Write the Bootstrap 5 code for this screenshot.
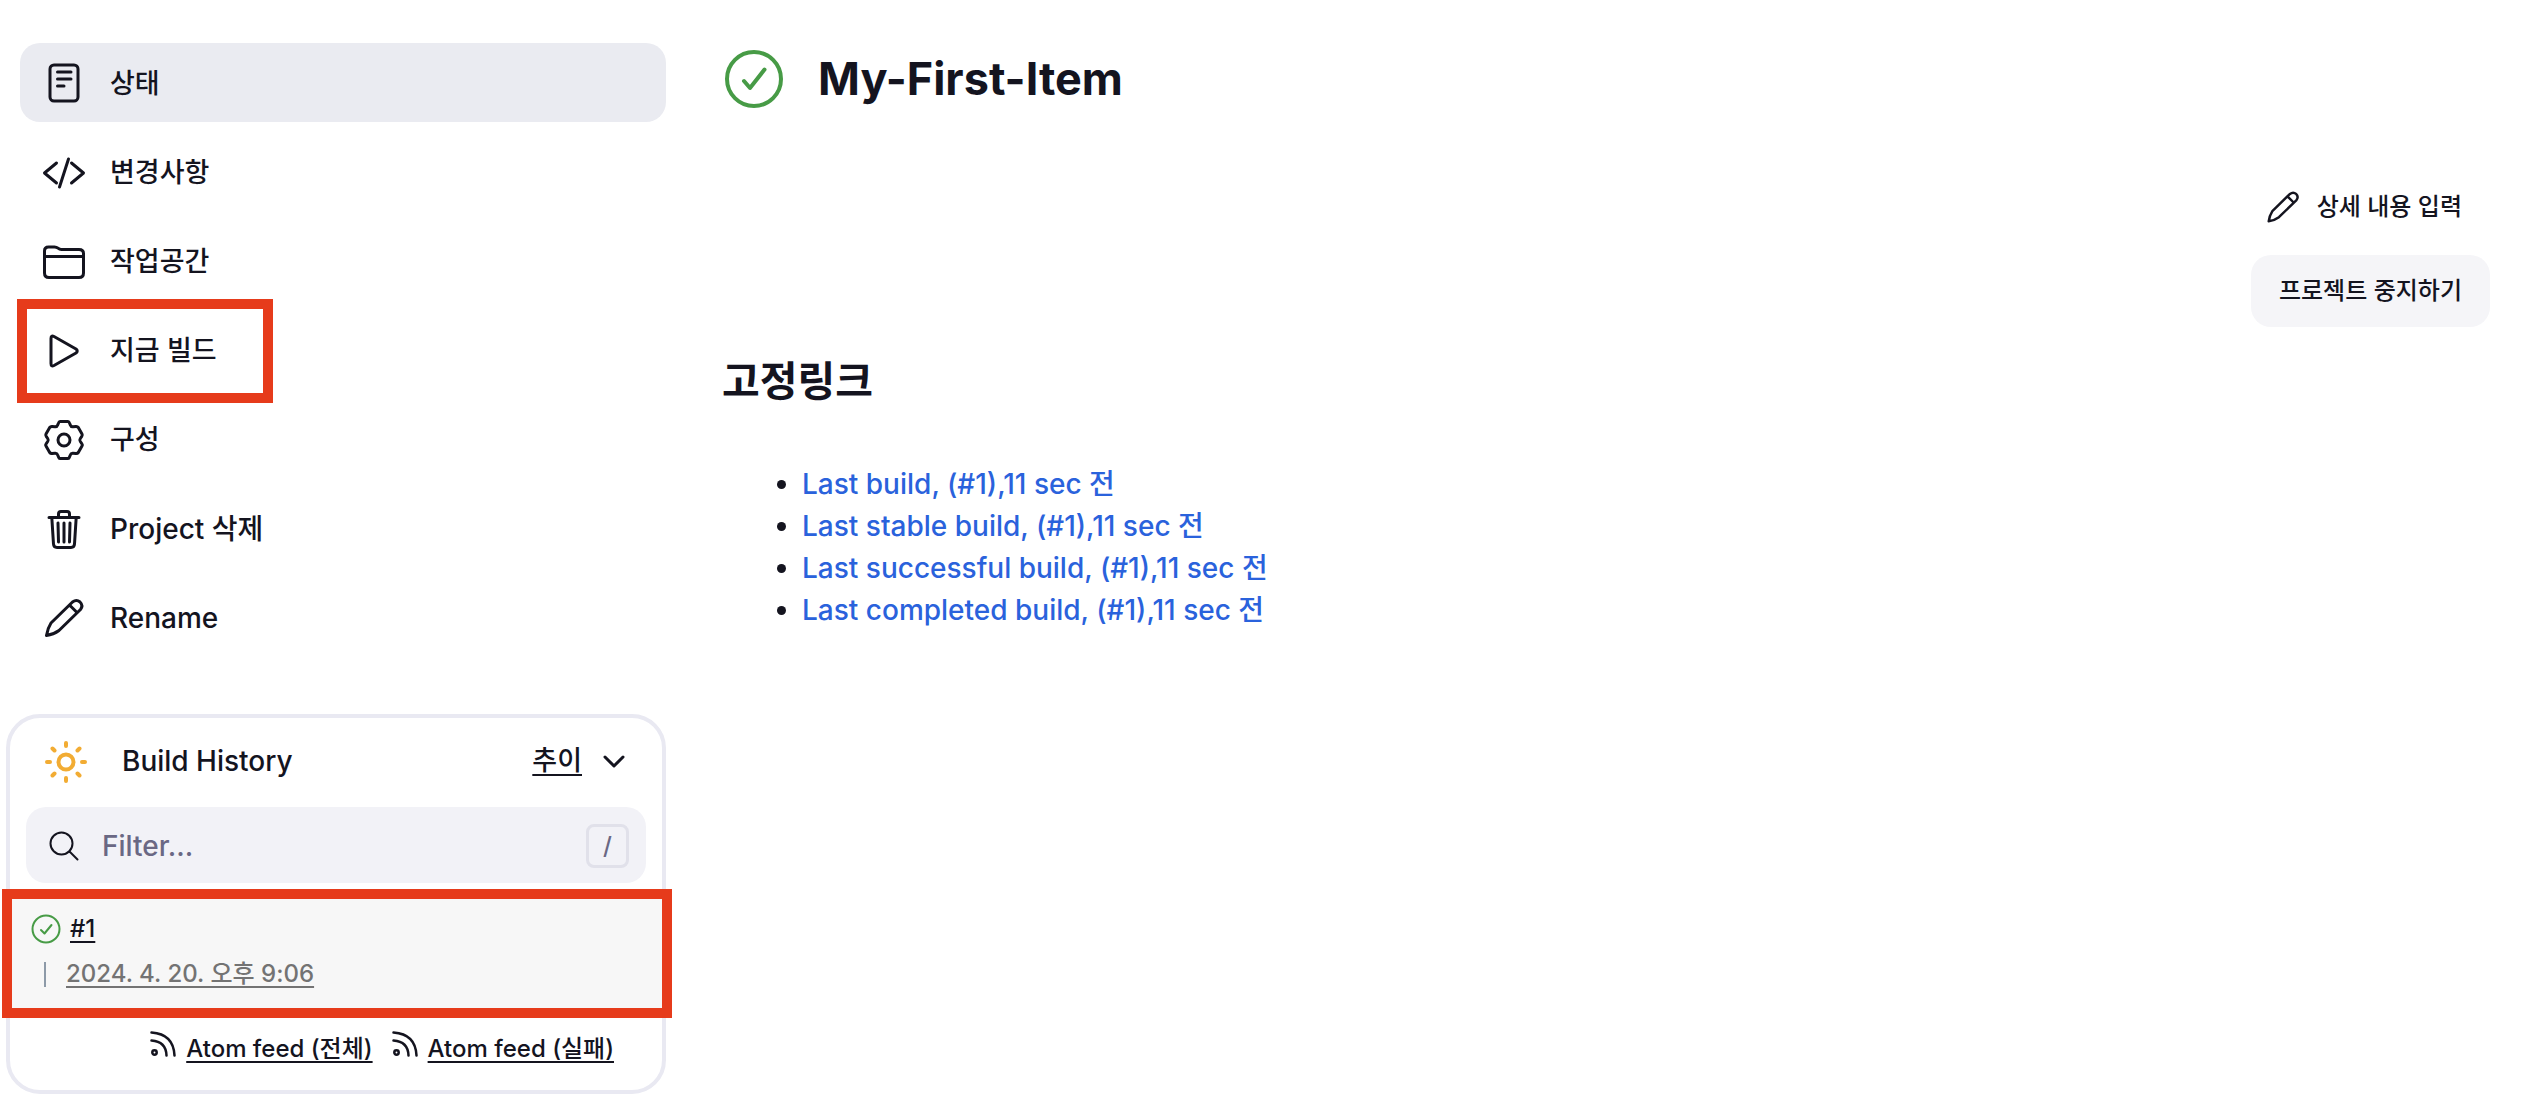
<!DOCTYPE html>
<html lang="ko">
<head>
<meta charset="utf-8">
<meta name="viewport" content="width=device-width, initial-scale=1">
<title>My-First-Item</title>
<link href="https://cdn.jsdelivr.net/npm/bootstrap@5.3.0/dist/css/bootstrap.min.css" rel="stylesheet">
<script defer src="https://cdn.jsdelivr.net/npm/bootstrap@5.3.0/dist/js/bootstrap.bundle.min.js"></script>
<style>
  :root { --ink: #14141f; --line: #e9e9f2; --alert: #e63b1b; --ok: #479b46; --sun: #f2ac33; }
  body { font-family: Inter, "Noto Sans CJK KR", sans-serif; font-size: 28px; line-height: 42px; font-weight: 500; color: var(--ink); }
  a { color: inherit; }
  svg { fill: none; stroke: currentColor; stroke-width: 3; stroke-linecap: round; stroke-linejoin: round; flex: none; display: block; }
  .ko { font-size: 27px; }

  .sidebar { width: 666px; flex: none; padding-top: 43px; }
  .tasks { gap: 10px; padding-left: 20px; margin-bottom: 58px; }
  .tasks .nav-link { display: flex; align-items: center; gap: 24px; height: 79px; padding: 2px 22px 0; border-radius: 20px; color: var(--ink); }
  .tasks .nav-link.active { background: #eaebf1; }
  .marked::after { content: ""; position: absolute; border: 10px solid var(--alert); pointer-events: none; }
  .build-now::after { left: -3px; top: -11px; bottom: -14px; width: 256px; }

  .history { margin-left: 6px; border: 4px solid var(--line); border-radius: 34px; }
  .history-head { height: 89px; padding: 0 36px 4px 34px; gap: 34px; }
  .underlined { text-decoration: underline; text-decoration-thickness: 2px; text-underline-offset: 4px; }
  .toggle { gap: 20px; }
  .sun { stroke: var(--sun); stroke-width: 4; }
  .filter-box { margin: 0 16px 16px; height: 76px; padding: 2px 17px 0 23px; gap: 23px; border-radius: 20px; background: #f2f2f7; }
  .filter-box input { font-size: 28px; line-height: 42px; font-weight: 500; color: var(--ink); background: none; }
  .filter-box input::placeholder { color: #6a6884; opacity: 1; }
  .hint { width: 43px; height: 44px; border: 3px solid #e1e1ea; border-radius: 8px; font: 500 24px/38px Inter, sans-serif; color: #6a6884; }
  .thin { stroke-width: 2; }
  .fine { font-size: 24px; line-height: 36px; }
  .build { background: #f7f7f7; padding: 12px 20px 16px; }
  .build::after { inset: -10px -10px -10px -8px; }
  .ok { stroke: var(--ok); }
  .ok-large { stroke-width: 4; }
  .build-date { color: #737373; margin-top: 9px; padding-left: 14px; gap: 20px; }
  .tick-bar { width: 2px; height: 25px; background: #8d9aa8; }
  .feeds { padding: 23px 48px; gap: 19px; }
  .feeds a { gap: 10px; }
  .feeds svg { stroke-width: 2.5; }

  .content { padding: 43px 34px 0 56px; }
  .page-head { height: 72px; gap: 34px; margin-bottom: 56px; }
  .page-head h1 { font-size: 45px; line-height: 60px; font-weight: 700; }
  .actions { gap: 12px; }
  .actions .btn { display: flex; align-items: center; gap: 16px; height: 72px; padding: 0 28px; border: 0; border-radius: 20px; font-size: 24px; font-weight: 500; color: var(--ink); }
  .actions .btn-soft { background: #f5f5f8; }
  .links-title { font-size: 41px; line-height: 60px; font-weight: 700; margin: 24px 0 52px; }
  .permalinks { padding-left: 80px; }
  .permalinks a { color: #2a62dc; }
</style>
</head>
<body>
<div class="d-flex align-items-start">
  <aside class="sidebar">
    <nav class="tasks nav flex-column flex-nowrap">
      <a class="nav-link active" href="#" aria-current="page">
        <svg width="44" height="44" viewBox="0 0 44 44"><rect x="8" y="3" width="28" height="36" rx="4"/><path d="M15.500 10H29M15.500 17H29M15.500 24H22"/></svg>
        <span class="ko">상태</span></a>
      <a class="nav-link" href="#">
        <svg width="44" height="44" viewBox="0 0 44 44"><path d="M14.500 12 2.500 22l12 10M26.500 8l-9 28M29.500 12l12 10-12 10"/></svg>
        <span class="ko">변경사항</span></a>
      <a class="nav-link" href="#">
        <svg width="44" height="44" viewBox="0 0 44 44"><path d="M2.500 33V11q0-4 4-4h6q2 0 3.500 1.200t3.500 1.300H37q4.500 0 4.500 4V33q0 4.500-4.500 4.500H7Q2.500 37.500 2.500 33ZM2.500 16.500h39"/></svg>
        <span class="ko">작업공간</span></a>
      <a class="nav-link position-relative marked build-now" href="#">
        <svg width="44" height="44" viewBox="0 0 44 44"><path d="M9 9.500v25q0 3.500 3 2L34 24q2.500-2 0-4L12 7.500q-3-1.500-3 2Z"/></svg>
        <span class="ko">지금 빌드</span></a>
      <a class="nav-link" href="#">
        <svg width="44" height="44" viewBox="-22 -22 44 44"><circle r="6"/><path d="M-4-18.500H4Q5-18.500 5.500-17L6.300-15Q7-13 9-13.200L12-13.500Q13.500-13.600 14.300-12.500L18-6Q18.700-4.800 17.800-3.600L16.300-1.500Q15.300 0 16.300 1.500L17.800 3.600Q18.700 4.800 18 6L14.300 12.500Q13.500 13.600 12 13.500L9 13.200Q7 13 6.300 15L5.500 17Q5 18.500 4 18.500H-4Q-5 18.500-5.500 17L-6.300 15Q-7 13-9 13.200L-12 13.500Q-13.500 13.600-14.300 12.500L-18 6Q-18.700 4.800-17.800 3.600L-16.300 1.500Q-15.300 0-16.300-1.500L-17.800-3.600Q-18.700-4.800-18-6L-14.300-12.500Q-13.500-13.600-12-13.500L-9-13.200Q-7-13-6.300-15L-5.500-17Q-5-18.500-4-18.500Z"/></svg>
        <span class="ko">구성</span></a>
      <a class="nav-link" href="#">
        <svg width="44" height="44" viewBox="0 0 44 44"><path d="M7 10.500h30M9.800 10.500 11.500 37q.2 3.500 3.500 3.500h14q3.300 0 3.500-3.500L34.200 10.500M16.500 10V7q0-2.500 2.500-2.500h6q2.500 0 2.500 2.500v3M16 16l.5 19M22 16v19M28 16l-.5 19"/></svg>
        <span>Project 삭제</span></a>
      <a class="nav-link" href="#">
        <svg width="44" height="44" viewBox="0 0 44 44"><path d="M4.500 39.500q1-7 4.500-12.500L30.500 6q4-3 7.500 0 3.500 3.500.5 7.500L17 34.500q-5.500 4-12.500 5ZM27.500 9l7.500 7.500"/></svg>
        <span>Rename</span></a>
    </nav>

    <section class="history">
      <div class="history-head d-flex align-items-center">
        <svg class="sun" width="44" height="44" viewBox="-22 -23 44 44"><circle r="7.500"/><path d="M0-19v3M0 19v-3M-19 0h3M19 0h-3M-13.500-13.500l2 2M13.500-13.500l-2 2M-13.500 13.500l2-2M13.500 13.500l-2-2"/></svg>
        <span class="flex-grow-1">Build History</span>
        <div class="toggle d-flex align-items-center">
          <a class="underlined ko" href="#">추이</a>
          <svg width="24" height="24" viewBox="0 0 24 24"><path d="m3 8 9 9 9-9"/></svg>
        </div>
      </div>
      <div class="filter-box d-flex align-items-center">
        <svg class="thin" width="30" height="30" viewBox="0 0 30 30"><circle cx="12.500" cy="12.500" r="11"/><path d="m20.500 20.500 8 8"/></svg>
        <input class="form-control border-0 p-0 shadow-none" type="text" placeholder="Filter..." aria-label="Filter">
        <span class="hint flex-shrink-0 text-center">/</span>
      </div>
      <div class="build marked position-relative fine">
        <div class="d-flex align-items-center gap-2">
          <svg class="ok thin" width="32" height="32" viewBox="-16 -16 32 32"><circle r="13.500"/><path d="m-5 1 3.500 3.500L5.500-4"/></svg>
          <a class="underlined" href="#">#1</a>
        </div>
        <div class="build-date d-flex align-items-center">
          <span class="tick-bar"></span>
          <a class="underlined" href="#">2024. 4. 20. 오후 9:06</a>
        </div>
      </div>
      <div class="feeds fine d-flex justify-content-end">
        <a class="d-flex text-decoration-none" href="#">
          <svg width="26" height="26" viewBox="0 0 26 26"><circle cx="4.500" cy="21.500" r="2.200"/><path d="M1.500 9.500Q16 10.500 16.500 24.500M1.500 1.500Q23.500 3 24.500 24.500"/></svg>
          <span class="underlined">Atom feed (전체)</span></a>
        <a class="d-flex text-decoration-none" href="#">
          <svg width="26" height="26" viewBox="0 0 26 26"><circle cx="4.500" cy="21.500" r="2.200"/><path d="M1.500 9.500Q16 10.500 16.500 24.500M1.500 1.500Q23.500 3 24.500 24.500"/></svg>
          <span class="underlined">Atom feed (실패)</span></a>
      </div>
    </section>
  </aside>

  <main class="content flex-grow-1">
    <div class="page-head d-flex align-items-center">
      <svg class="ok ok-large" width="62" height="62" viewBox="-32 -31 62 62"><circle r="27"/><path d="m-10 2 6 7L10.500-9.500"/></svg>
      <h1 class="mb-0">My-First-Item</h1>
    </div>
    <div class="actions d-flex flex-column align-items-end">
      <a class="btn" href="#">
        <svg width="36" height="36" viewBox="0 0 44 44"><path d="M4.500 39.500q1-7 4.500-12.500L30.500 6q4-3 7.500 0 3.500 3.500.5 7.500L17 34.500q-5.500 4-12.500 5ZM27.500 9l7.500 7.500"/></svg>
        상세 내용 입력</a>
      <button class="btn btn-soft" type="button">프로젝트 중지하기</button>
    </div>
    <h2 class="links-title">고정링크</h2>
    <ul class="permalinks mb-0">
      <li><a class="text-decoration-none" href="#">Last build, (#1),11 sec 전</a></li>
      <li><a class="text-decoration-none" href="#">Last stable build, (#1),11 sec 전</a></li>
      <li><a class="text-decoration-none" href="#">Last successful build, (#1),11 sec 전</a></li>
      <li><a class="text-decoration-none" href="#">Last completed build, (#1),11 sec 전</a></li>
    </ul>
  </main>
</div>
</body>
</html>
